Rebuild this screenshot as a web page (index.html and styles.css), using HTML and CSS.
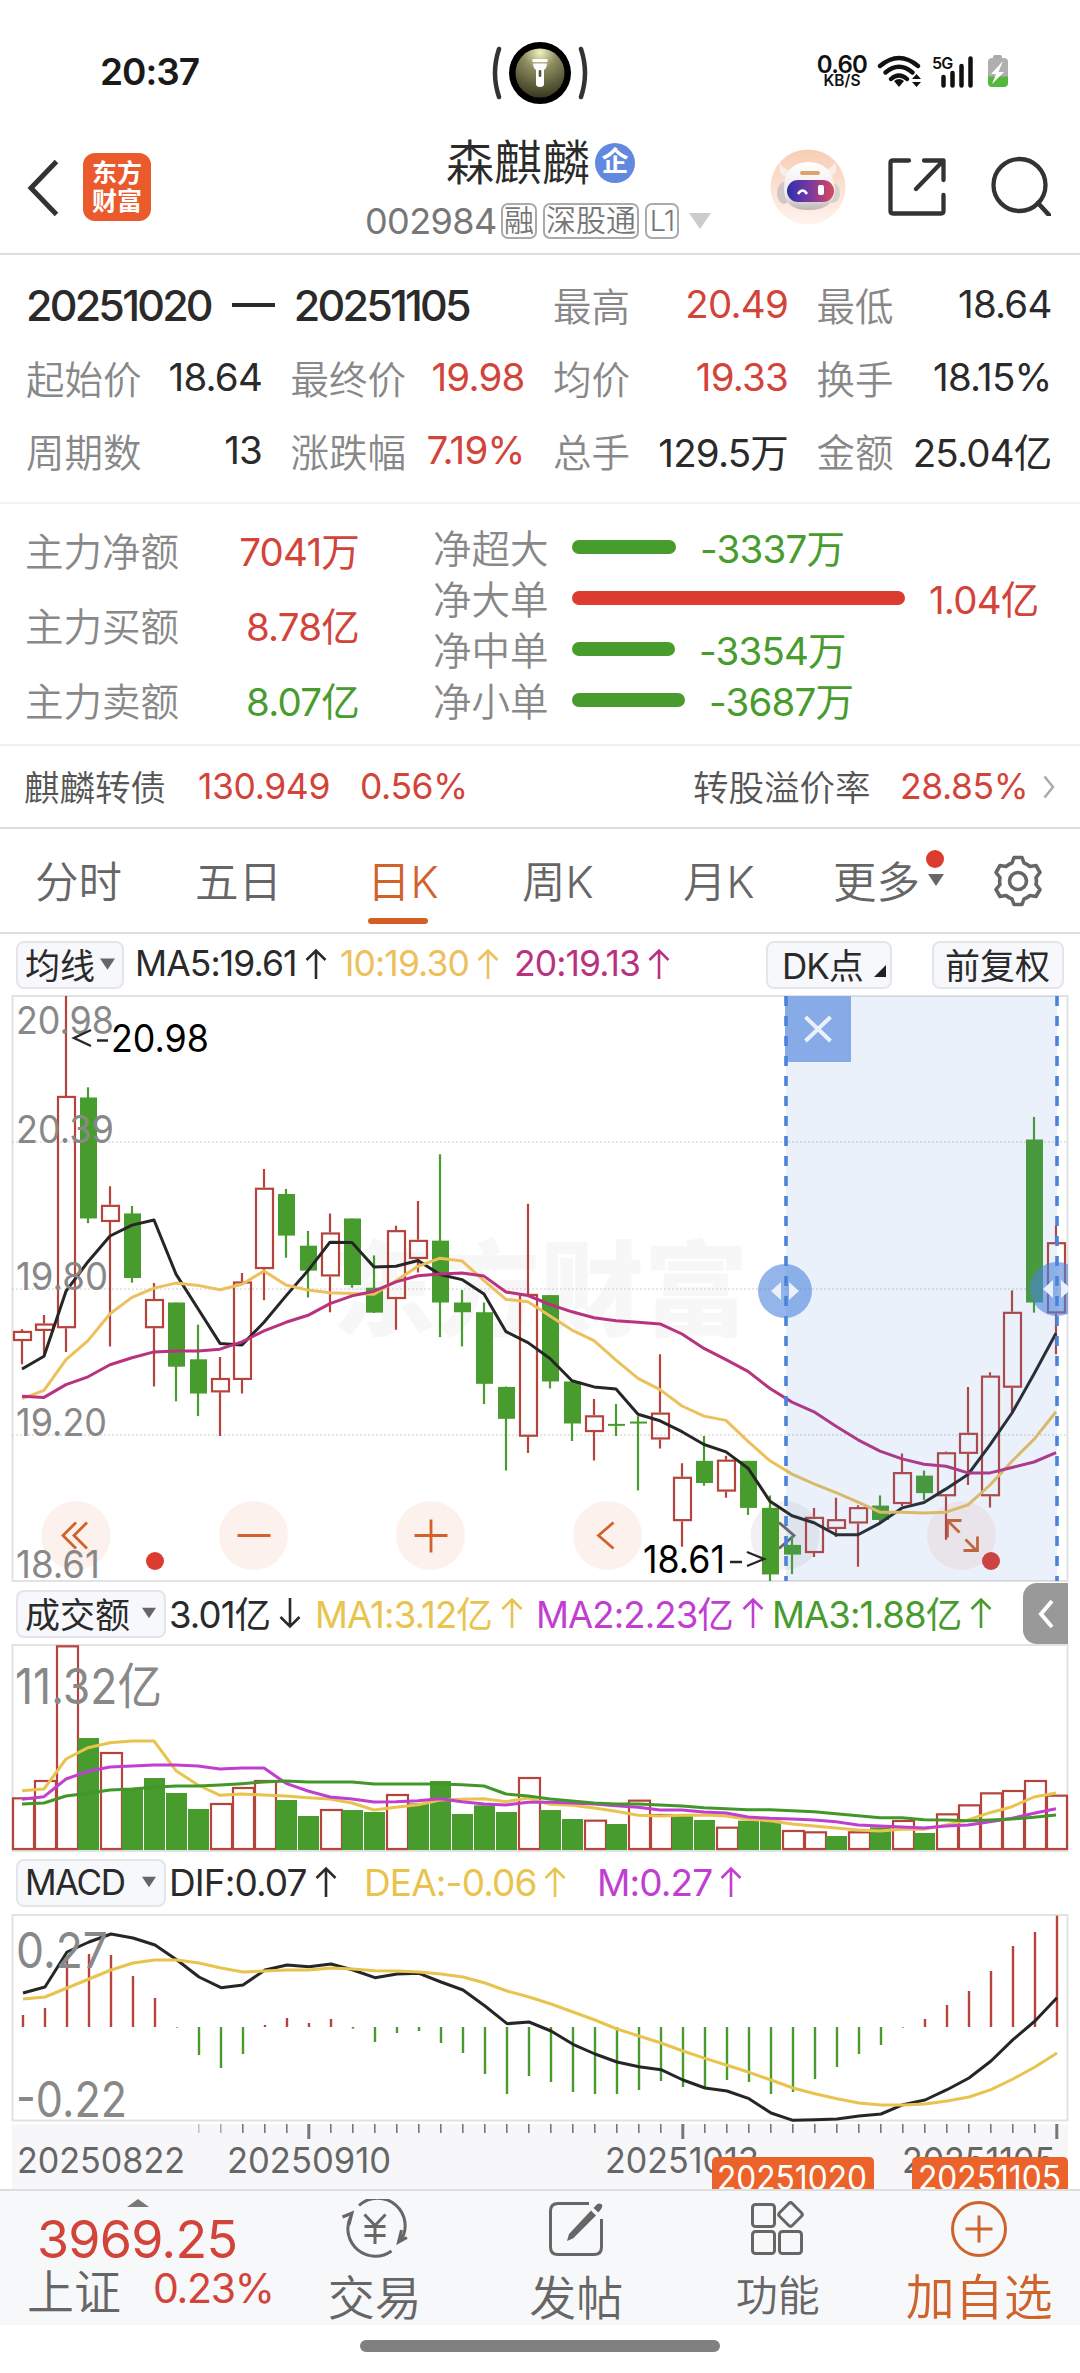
FILE: index.html
```html
<!DOCTYPE html>
<html lang="zh-CN">
<head>
<meta charset="utf-8">
<title>森麒麟 002984</title>
<link rel="stylesheet" href="styles.css">
</head>
<body>
<svg class="defs" aria-hidden="true">
  <symbol id="up" viewBox="0 0 22 32"><path d="M11 31V3M1.5 12 11 2.500l9.500 9.500" fill="none" stroke="currentColor" stroke-width="2.600"/></symbol>
  <symbol id="down" viewBox="0 0 22 32"><path d="M11 1v28M1.500 20 11 29.500 20.500 20" fill="none" stroke="currentColor" stroke-width="2.600"/></symbol>
</svg>

<div class="status">
  <span class="clock">20:37</span>
  <svg class="island" width="96" height="64" viewBox="0 0 96 64">
    <defs>
      <radialGradient id="lamp" cx=".5" cy=".08" r=".95"><stop offset="0" stop-color="#f0f2c4"/><stop offset=".35" stop-color="#8f8f62"/><stop offset="1" stop-color="#35351e"/></radialGradient>
    </defs>
    <path d="M7 8Q-1 32 7 56M89 8q8 24 0 48" fill="none" stroke="#333" stroke-width="4.500" stroke-linecap="round"/>
    <circle cx="48" cy="32" r="31"/>
    <circle cx="48" cy="32" r="24.500" fill="url(#lamp)"/>
    <path d="M40.500 18h15v3h-15zM41 22.500h14q0 4-3 6.500v14q0 3-4 3t-4-3V29q-3-2.500-3-6.500z" fill="#fff"/>
    <rect x="46.700" y="29" width="2.600" height="7" rx="1.300" fill="#55553a"/>
  </svg>
  <div class="signals">
    <div class="speed"><b>0.60</b><i>KB/S</i></div>
    <svg width="132" height="36" viewBox="876 53 132 36">
      <path d="M880 66Q899 50 918 66M885.500 72.500q13.500-11.500 27 0M891 79q8-7 16 0" fill="none" stroke="#111" stroke-width="4.300" stroke-linecap="round"/>
      <path d="M894 81q5-4 10 0l-5 6zM912 79h9l-4.500-5zM912 82h9l-4.500 5z" fill="#111"/>
      <path d="M943.500 77v8.500M952.500 73v12.500M961.500 66v19.500M970.500 58.500v27" stroke="#111" stroke-width="4.500" stroke-linecap="round"/>
      <rect x="993" y="55" width="9" height="5" rx="2" fill="#aaa"/>
      <path d="M988 62q0-4 4-4h12q4 0 4 4v15h-20z" fill="#afafaf"/>
      <path d="M988 76.500h20V83q0 4-4 4h-12q-4 0-4-4z" fill="#55b83a"/>
      <path d="M1003 61 991 74h5l-4 10 12-12h-5.500z" fill="#fff"/>
      <text x="932" y="69" class="net">5G</text>
    </svg>
  </div>
</div>

<header class="head">
  <div class="head-left">
    <svg width="34" height="60" viewBox="0 0 34 60"><path d="M30.500 3.500 5 30l25.500 26.500" fill="none" stroke="#333" stroke-width="5"/></svg>
    <div class="logo"><span>东方</span><span>财富</span></div>
  </div>
  <div class="head-mid">
    <div class="name">森麒麟<span class="badge">企</span></div>
    <div class="code"><span class="num">002984</span><em>融</em><em>深股通</em><em>L1</em>
      <svg width="22" height="16" viewBox="0 0 22 16"><path d="M0 0h22L11 16z" fill="#ccc"/></svg>
    </div>
  </div>
  <div class="head-right">
    <svg width="76" height="76" viewBox="0 0 76 76">
      <defs>
        <linearGradient id="halo" x2="0" y2="1"><stop offset="0" stop-color="#f8cdb4"/><stop offset="1" stop-color="#fff4ee"/></linearGradient>
        <linearGradient id="visor"><stop offset="0" stop-color="#2f2fae"/><stop offset=".5" stop-color="#7a3a9e"/><stop offset="1" stop-color="#d84a5c"/></linearGradient>
        <linearGradient id="shell" x2="0" y2="1"><stop offset="0" stop-color="#fff"/><stop offset=".7" stop-color="#eee9e8"/><stop offset="1" stop-color="#bdb3b2"/></linearGradient>
      </defs>
      <circle cx="38" cy="38" r="37.500" fill="url(#halo)"/>
      <path d="M17 28Q7 26 10 14q3 6 11 8zM59 28q10-3 6-15-3 6-10 9z" fill="#f6eeeb"/>
      <ellipse cx="14" cy="44" rx="7" ry="11" fill="#cfc7c8"/><ellipse cx="63" cy="44" rx="7" ry="10" fill="#d8d0d0"/>
      <path d="M14 40Q14 14 38 13q24 0 27 27 0 21-27 21-24 0-24-21z" fill="url(#shell)"/>
      <rect x="30" y="22" width="20" height="4" rx="2" fill="#dda36b"/>
      <rect x="17" y="31" width="47" height="22" rx="11" fill="url(#visor)"/>
      <path d="M28 45q4.500-7 9 0" fill="none" stroke="#fff" stroke-width="2.600"/>
      <rect x="48" y="36" width="6" height="10" rx="2" fill="#fff"/>
    </svg>
    <svg width="58" height="58" viewBox="0 0 58 58"><path d="M21 2.500H5Q2.500 2.500 2.500 5v48q0 2.500 2.500 2.500h48q2.500 0 2.500-2.500V37M36 2.500h19.500V22M55 3 28 31" fill="none" stroke="#333" stroke-width="4.300" stroke-linecap="round" stroke-linejoin="round"/></svg>
    <svg width="60" height="60" viewBox="0 0 60 60"><circle cx="28.500" cy="29" r="26" fill="none" stroke="#333" stroke-width="4.300"/><path d="M47 47l11 12" stroke="#333" stroke-width="4.600" stroke-linecap="round"/></svg>
  </div>
</header>

<section class="stats">
  <div class="range"><b>20251020</b><b class="dash"></b><b>20251105</b></div>
  <div class="cell c3"><label>最高</label><span class="red">20.49</span></div>
  <div class="cell c4"><label>最低</label><span>18.64</span></div>
  <div class="cell"><label>起始价</label><span>18.64</span></div>
  <div class="cell"><label>最终价</label><span class="red">19.98</span></div>
  <div class="cell"><label>均价</label><span class="red">19.33</span></div>
  <div class="cell"><label>换手</label><span>18.15%</span></div>
  <div class="cell"><label>周期数</label><span>13</span></div>
  <div class="cell"><label>涨跌幅</label><span class="red">7.19%</span></div>
  <div class="cell"><label>总手</label><span>129.5万</span></div>
  <div class="cell"><label>金额</label><span>25.04亿</span></div>
</section>

<section class="flow">
  <div class="main-flow">
    <div class="cell"><label>主力净额</label><span class="red">7041万</span></div>
    <div class="cell"><label>主力买额</label><span class="red">8.78亿</span></div>
    <div class="cell"><label>主力卖额</label><span class="green">8.07亿</span></div>
  </div>
  <div class="net-flow">
    <div class="bar-row green"><label>净超大</label><i class="bar" style="width:104px"></i><span>-3337万</span></div>
    <div class="bar-row red"><label>净大单</label><i class="bar" style="width:333px"></i><span>1.04亿</span></div>
    <div class="bar-row green"><label>净中单</label><i class="bar" style="width:103px"></i><span>-3354万</span></div>
    <div class="bar-row green"><label>净小单</label><i class="bar" style="width:113px"></i><span>-3687万</span></div>
  </div>
</section>

<section class="bond">
  <label>麒麟转债</label><span>130.949</span><span>0.56%</span>
  <label class="premium">转股溢价率</label><span class="ratio">28.85%</span>
  <svg width="12" height="24" viewBox="0 0 12 24"><path d="M1.500 1.500 10 12 1.500 22.500" fill="none" stroke="#aaa" stroke-width="2.500"/></svg>
</section>

<nav class="tabs">
  <span>分时</span><span>五日</span><span class="on">日K</span><span>周K</span><span>月K</span>
  <span class="more">更多<i class="dot"></i><svg width="16" height="12" viewBox="0 0 16 12"><path d="M0 0h16L8 12z" fill="#666"/></svg></span>
  <svg class="gear" width="54" height="54" viewBox="0 0 54 54"><g fill="none" stroke="#666" stroke-width="3.600" stroke-linejoin="round"><path d="M23 3.500h8l2 5.500q3 1 6 3.500l6-1 4 7-4 5q.8 3.500 0 7l4 5-4 7-6-1q-3 2.500-6 3.500l-2 5.500h-8l-2-5.500q-3-1-6-3.500l-6 1-4-7 4-5q-.8-3.500 0-7l-4-5 4-7 6 1q3-2.500 6-3.500z"/><circle cx="27" cy="27" r="8.500"/></g></svg>
</nav>

<div class="bar-head ma">
  <div class="pick">均线<svg width="15" height="12" viewBox="0 0 16 12"><path d="M0 0h16L8 12z" fill="#666"/></svg></div>
  <span>MA5:19.61<svg><use href="#up"/></svg></span>
  <span class="amber">10:19.30<svg><use href="#up"/></svg></span>
  <span class="rose">20:19.13<svg><use href="#up"/></svg></span>
  <div class="pick dk">DK点<svg width="12" height="12" viewBox="0 0 12 12"><path d="M12 0v12H0z" fill="#222"/></svg></div>
  <div class="pick adjust">前复权</div>
</div>
<svg id="kline" class="plot" width="1080" height="588" viewBox="0 995 1080 588"></svg>

<div class="bar-head vol">
  <div class="pick">成交额<svg width="14" height="12" viewBox="0 0 16 12"><path d="M0 0h16L8 12z" fill="#666"/></svg></div>
  <span>3.01亿<svg><use href="#down"/></svg></span>
  <span class="gold">MA1:3.12亿<svg><use href="#up"/></svg></span>
  <span class="violet">MA2:2.23亿<svg><use href="#up"/></svg></span>
  <span class="green">MA3:1.88亿<svg><use href="#up"/></svg></span>
  <div class="drawer"><svg width="18" height="30" viewBox="0 0 18 30"><path d="M15 2 4 15l11 13" fill="none" stroke="#fff" stroke-width="4"/></svg></div>
</div>
<svg id="volume" class="plot" width="1080" height="209" viewBox="0 1644 1080 209"></svg>

<div class="bar-head macd">
  <div class="pick">MACD<svg width="14" height="12" viewBox="0 0 16 12"><path d="M0 0h16L8 12z" fill="#666"/></svg></div>
  <span>DIF:0.07<svg><use href="#up"/></svg></span>
  <span class="gold">DEA:-0.06<svg><use href="#up"/></svg></span>
  <span class="violet">M:0.27<svg><use href="#up"/></svg></span>
</div>
<svg id="macd" class="plot" width="1080" height="276" viewBox="0 1913 1080 276"></svg>

<footer class="dock">
  <div class="index">
    <svg width="22" height="8" viewBox="0 0 22 8"><path d="M0 8h22L11 0z" fill="#777"/></svg>
    <b>3969.25</b>
    <div class="idx-row"><label>上证</label><span>0.23%</span></div>
  </div>
  <div class="item">
    <svg width="68" height="60" viewBox="0 0 68 60"><g fill="none" stroke="#666" stroke-width="3"><path d="M18 6.500A27.500 27.500 0 0 1 59.500 42M50.500 52A27.500 27.500 0 0 1 9.500 18M1.500 18l9.500-4-3 12M66 38.500l-8.500 4.500 3-12M23.500 15.500 34 26.500l10.500-11M34 26v19M23.500 27.500h21M23.500 36.500h21"/></g></svg>
    <span class="t-47">交易</span>
  </div>
  <div class="item">
    <svg width="60" height="60" viewBox="0 0 60 60"><path d="M43 4.500H12q-7.500 0-7.500 7.500v36q0 7.500 7.500 7.500h36q7.500 0 7.500-7.500V20" fill="none" stroke="#666" stroke-width="3"/><path d="M45 11.500l5 5-23 23-6 2.500 2-7zM47.500 9l3.800-4q4-1.500 5 1.500.5 2-4 7z" fill="#666"/></svg>
    <span class="t-47">发帖</span>
  </div>
  <div class="item">
    <svg width="60" height="60" viewBox="0 0 60 60"><g fill="none" stroke="#666" stroke-width="3"><rect x="4.500" y="5.500" width="22" height="22" rx="3"/><rect x="4.500" y="32.500" width="22" height="22" rx="3"/><rect x="31.500" y="32.500" width="22" height="22" rx="3"/><rect x="33.500" y="6.500" width="18" height="18" rx="2.500" transform="rotate(45 42.500 15.500)"/></g></svg>
    <span class="t-42">功能</span>
  </div>
  <div class="item orange">
    <svg width="60" height="60" viewBox="0 0 60 60"><g fill="none" stroke="currentColor" stroke-width="3"><circle cx="30" cy="30" r="26.500"/><path d="M30 16.500v27M16.500 30h27"/></g></svg>
    <span class="t-48">加自选</span>
  </div>
</footer>
<div class="home"><i></i></div>
<script src="script.js"></script>
</body>
</html>
```
FILE: styles.css
```css
* { box-sizing: border-box; }
body {
  margin: 0;
  width: 1080px;
  background: #fff;
  color: #2a2a2a;
  font-family: Inter, "Noto Sans CJK SC", sans-serif;
  font-weight: 400;
  white-space: nowrap;
}
svg { display: block; flex: none; }
i, em { font-style: normal; }
label, .name, .code, .tabs, .item { font-weight: 350; }
.defs { width: 0; height: 0; position: absolute; }
.red { color: #d2443a; }
.green { color: #489c2d; }
.amber { color: #ecc05c; }
.gold { color: #e8c44e; }
.rose { color: #b83280; }
.violet { color: #c03fd0; }
.orange { color: #d0622c; }

.status { height: 142px; display: grid; grid-template-columns: 392px 96px 420px; align-items: center; padding: 0 0 0 100px; }
.clock { font-size: 37px; font-weight: 600; letter-spacing: -1px; color: #1a1a1a; }
.island { margin-top: 3px; }
.signals { display: flex; gap: 9px; align-items: center; justify-content: flex-end; }
.speed { display: flex; flex-direction: column; align-items: center; color: #111; font-weight: 600; }
.speed b { font-size: 24px; line-height: 19px; font-weight: 600; letter-spacing: -.8px; }
.speed i { font-size: 15.500px; line-height: 14px; }
.net { font-size: 16px; font-weight: 600; letter-spacing: -.8px; fill: #111; }

.head { height: 113px; border-bottom: 2px solid #ddd; display: grid; grid-template-columns: 300px 470px 310px; }
.head-left { display: flex; align-items: flex-start; padding: 11px 0 0 26px; gap: 23px; }
.head-left > svg { margin-top: 5px; }
.logo { width: 68px; height: 68px; border-radius: 12px; background: #ea5a2c; color: #fff; font-weight: 700; font-size: 25px; line-height: 28px; display: flex; flex-direction: column; align-items: center; justify-content: center; }
.head-mid { display: flex; flex-direction: column; padding-left: 65px; }
.name { font-size: 48px; line-height: 48px; height: 58px; display: flex; align-items: center; padding-left: 81px; gap: 5px; margin-top: -8px; }
.badge { width: 40px; height: 40px; border-radius: 50%; background: #6289e0; color: #fff; font-size: 27px; font-weight: 700; line-height: 38px; text-align: center; }
.code { display: flex; align-items: center; height: 40px; margin-top: 9px; color: #777; font-size: 36px; }
.code .num { width: 136px; letter-spacing: -.6px; font-weight: 400; }
.code em { border: 2px solid #aaa; border-radius: 7px; height: 36px; line-height: 31px; font-size: 30px; padding: 0 1px; width: 36px; text-align: center; margin-right: 6px; }
.code em:nth-of-type(2) { width: 96px; }
.code em:nth-of-type(3) { width: 34px; font-size: 29px; letter-spacing: -1px; }
.code svg { margin-left: 4px; }
.head-right { display: flex; align-items: flex-start; padding: 7px 0 0 0; }
.head-right svg:nth-child(2) { margin: 9px 0 0 42px; }
.head-right svg:nth-child(3) { margin: 7px 0 0 45px; }

.stats { height: 249px; border-bottom: 2px solid #f2f2f2; padding: 13px 28px 0 26px; display: grid; grid-template-columns: 236px 234px 235px 235px; grid-auto-rows: 73px; column-gap: 28.500px; }
.range { grid-column: span 2; display: flex; align-items: center; font-size: 43px; }
.range b { font-weight: 500; letter-spacing: -2.800px; }
.range .dash { width: 43px; height: 4px; background: #2a2a2a; margin: 0 19px 0 21px; }
.cell { display: flex; align-items: center; justify-content: space-between; font-size: 38.500px; padding-bottom: 2px; }
.cell label, .bar-row label { color: #888; }
.cell span, .bar-row span, .bond span { letter-spacing: -.8px; }

.flow { height: 242px; border-bottom: 2px solid #f0f0f0; display: flex; padding-left: 25px; }
.main-flow { width: 334px; margin-right: 74px; padding-top: 8px; display: grid; grid-auto-rows: 75px; height: 233px; }
.net-flow { padding-top: 16.500px; display: grid; grid-auto-rows: 51px; }
.bar-row { display: flex; align-items: center; font-size: 38.500px; }
.bar-row label { width: 139px; }
.bar { height: 14px; border-radius: 7px; background: currentColor; margin-top: 2px; }
.bar-row span { margin-left: 24px; }
.bar-row.red .bar { background: #dc3b30; }

.bond { height: 83px; border-bottom: 2px solid #ddd; display: flex; align-items: center; padding: 0 24px; font-size: 35.500px; }
.bond label { color: #555; width: 174px; margin-top: -3px; }
.bond span { color: #d2443a; width: 162px; letter-spacing: -.4px; }
.bond label.premium { width: 207px; margin-left: 171px; }
.bond span.ratio { width: 143px; }

.tabs { height: 105px; border-bottom: 2px solid #ddd; display: grid; grid-template-columns: 160px 172px 155px 161px 150px 194px 1fr; padding-left: 35px; align-items: center; font-size: 43.500px; color: #666; }
.tabs span { display: flex; align-items: center; height: 103px; position: relative; padding-bottom: 2px; }
.tabs .on { color: #d0622c; }
.tabs .on::after { content: ""; position: absolute; left: 1px; bottom: 8px; width: 60px; height: 6px; border-radius: 3px; background: #d35f27; }
.more .dot { position: absolute; left: 93px; top: 21px; width: 18px; height: 18px; border-radius: 50%; background: #dc3b30; }
.more svg { margin-left: 8px; }
.gear { margin-left: -36px; }

.bar-head { display: grid; align-items: center; font-size: 36px; padding-left: 16px; position: relative; }
.bar-head span { display: flex; align-items: center; letter-spacing: -.9px; padding-bottom: 2px; }
.bar-head span svg { width: 22px; height: 32px; margin-left: 8px; }
.pick { height: 48px; border: 2px solid #e3e5ea; border-radius: 8px; background: #f7f8fb; display: flex; align-items: center; padding: 0 7px 2px; font-size: 35px; gap: 5px; }
.ma { height: 61px; grid-template-columns: 119px 205px 174px 252px 126px 40px 132px; font-size: 35.500px; }
.ma .pick:first-child { width: 108px; }
.adjust { grid-column: 7; padding-left: 11px; }
.dk { padding-left: 14px; letter-spacing: -1px; }
.dk svg { align-self: flex-end; margin: 0 0 8px 6px; }
.vol { height: 61px; grid-template-columns: 153px 146px 221px 236px 251px 45px; font-size: 36.500px; }
.vol .pick, .macd .pick { width: 150px; justify-content: space-between; padding-right: 8px; }
.macd .pick { letter-spacing: -1.500px; }
.vol span svg { margin-left: 9px; }
.macd { height: 60px; grid-template-columns: 153px 195px 233px 200px; font-size: 37px; }
.drawer { height: 61px; background: #999; border-radius: 14px 0 0 14px; display: flex; align-items: center; justify-content: center; }
.plot text { font-size: 38.500px; }
.plot .scale { fill: #888; }
.plot .date { fill: #666; font-size: 36px; }
.plot .big { font-size: 49px; }
.plot .tag { fill: #fff; font-size: 34px; }
.plot .mark { fill: #f7f7f7; font-size: 103px; font-weight: 800; }

.dock { height: 136px; background: #f7f8fa; border-top: 2px solid #ddd; display: grid; grid-template-columns: 274px repeat(4, 201.500px); color: #666; }
.index { padding: 8px 0 0 27px; }
.index svg { margin-left: 100px; }
.index b { display: block; font-size: 52px; font-weight: 400; letter-spacing: -.8px; line-height: 50px; padding: 8px 0 0 10px; color: #d2443a; height: 58px; }
.idx-row { display: flex; align-items: center; font-size: 47px; height: 46px; }
.idx-row label { width: 126px; }
.idx-row span { color: #d2443a; font-size: 41px; letter-spacing: -1.300px; }
.item { display: flex; flex-direction: column; align-items: center; padding-top: 8px; }
.item span { height: 60px; line-height: 60px; margin-top: 9px; }
.item svg { height: 60px; }
.t-47 { font-size: 47px; }
.t-42 { font-size: 42px; }
.t-48 { font-size: 49px; }
.item .t-42 { margin-top: 7px; }
.home { height: 48px; display: flex; justify-content: center; padding-top: 15px; }
.home i { width: 360px; height: 12px; border-radius: 6px; background: #808080; }
```
FILE: script.js
```js
// Shared helpers. Every series has one point per trading day, 22px apart.
const STEP = 22, X0 = 22, LEFT = 12, RIGHT = 1068;
const RED = '#b5443c', GREEN = '#489c2d', GOLD = '#e8c44e', VIOLET = '#c03fd0', INK = '#262626';
const cx = i => X0 + i * STEP;
const line = (data, y, color, w) =>
  `<polyline fill="none" stroke="${color}" stroke-width="${w}" stroke-linejoin="round" points="${data.map((v, i) => cx(i) + ',' + y(v).toFixed(1)).join(' ')}"/>`;
const rect = (x, y, w, h, extra) => `<rect x="${x}" y="${y}" width="${w}" height="${h}" ${extra}/>`;
const text = (x, y, len, cls, s, extra = '') => `<text x="${x}" y="${y}" textLength="${len}" lengthAdjust="spacingAndGlyphs" class="${cls}" ${extra}>${s}</text>`;
const frame = (y, h) => rect(LEFT + .5, y, RIGHT - LEFT - 1, h, 'fill="none" stroke="#e2e2e2" stroke-width="2"');

// ---- Daily candles: [up/down, high, body top, body bottom, low]
const candles = [
  'r 898 902 928 988','r 861 883 902 962','r 41 298 895 956','g 276 302 613 625','r 530 578 622 942','g 581 600 766 778',
  'r 779 820 895 1045','g 829 829 994 1083','g 886 975 1063 1121','r 969 1023 1060 1172','r 753 775 1028 1063','r 486 534 743 823',
  'g 537 550 657 714','g 645 683 747 816','r 600 649 762 854','g 613 613 784 791','g 708 791 855 856','r 632 643 820 899',
  'r 568 668 717 752','g 448 670 829 918','g 797 829 854 942','g 829 854 1038 1090','g 1045 1046 1128 1261','r 575 807 1174 1216',
  'g 810 810 1032 1050','g 1032 1032 1140 1185','r 1077 1119 1162 1235','g 1090 1141 1145 1172','g 1121 1135 1139 1312','r 962 1112 1181 1204',
  'r 1242 1277 1391 1457','g 1172 1236 1293 1300','r 1223 1233 1315 1331','g 1236 1236 1357 1375','g 1325 1357 1528 1545','g 1429 1452 1477 1527',
  'r 1357 1380 1473 1483','r 1331 1386 1411 1432','r 1350 1355 1397 1508','g 1325 1351 1388 1395','r 1217 1265 1347 1352','g 1261 1274 1319 1337',
  'r 1212 1214 1327 1439','r 1046 1164 1218 1298','r 1008 1017 1327 1356','r 798 853 1048 1115','g 352 410 829 855','r 632 674 857 962'
].map(s => s.split(' ').map((v, i) => i ? +v : v));
const ma5 = [1000,967,800,724,658,630,617,756,845,934,938,880,812,747,674,675,738,736,721,757,770,807,904,932,973,1030,1046,1051,1116,1133,1161,1194,1213,1255,1340,1377,1395,1426,1426,1396,1357,1343,1308,1271,1195,1113,1013,908];
const ma10 = [1076,1055,976,927,858,816,792,779,785,796,782,748,784,797,804,806,808,773,736,715,722,773,821,827,864,900,927,977,1024,1053,1095,1121,1132,1186,1236,1270,1295,1318,1342,1368,1368,1370,1368,1349,1298,1237,1181,1110];
const ma20 = [1070,1073,1040,1020,989,971,956,954,954,949,930,902,880,862,832,812,800,776,760,756,753,761,802,811,834,853,868,876,880,884,910,947,976,1006,1050,1085,1110,1147,1182,1211,1231,1245,1250,1267,1267,1253,1239,1215];
const ky = v => 980 + v * .38903;

const candle = ([t, hi, a, b, lo], i) => {
  const x = cx(i), [H, A, B, L] = [hi, a, b, lo].map(ky);
  if (t === 'g') return `<path d="M${x} ${H}V${L}" stroke="${GREEN}" stroke-width="2.200"/>` + rect(x - 8, A, 17, Math.max(B - A, 2), `fill="${GREEN}"`);
  return `<path d="M${x} ${H}V${A}M${x} ${B}V${L}" stroke="${RED}" stroke-width="2.200"/>` + rect(x - 8, A + 1, 17, B - A - 2, `fill="none" stroke="${RED}" stroke-width="2.200"`);
};
const btn = (x, icon, bg = '#f9e6dc', fg = '#d0622c') =>
  `<circle cx="${x}" cy="1535.500" r="34.500" fill="${bg}" fill-opacity=".55"/><path transform="translate(${x} 1535.500)" d="${icon}" fill="none" stroke="${fg}" stroke-width="2.800"/>`;
const handle = (x, y) => `<circle cx="${x}" cy="${y}" r="27" fill="#4b83dc" fill-opacity=".6"/><path d="M${x - 4} ${y - 9}v18l-10-9zM${x + 4} ${y - 9}v18l10-9z" fill="#eaf1fc"/>`;
const dashes = x => `<path d="M${x} 996V1581" stroke="#4b83d8" stroke-width="3.600" stroke-dasharray="10 10"/>`;

document.getElementById('kline').innerHTML =
  frame(996, 585)
  + text(332, 1328, 416, 'mark', '东方财富')
  + [1142, 1289, 1435].map(y => `<path d="M12 ${y}H1068" stroke="#ccc" stroke-dasharray="2 2"/>`).join('')
  + btn(76, 'M0-13-13 0 0 13M11-13-2 0 11 13') + btn(253.500, 'M-16 0h33') + btn(430.500, 'M-16 0h33M.500-16v33') + btn(607.500, 'M6-13-9 0 6 13')
  + btn(785, 'M-6-13 9 0-6 13', '#e6e6e6', '#666') + btn(961.500, 'M-14 2v-17h14M-13-14 -2-3M4 4 15 15M2 15h14V1')
  + candles.map(candle).join('')
  + line(ma5, ky, INK, 3) + line(ma10, ky, '#ecc05c', 3) + line(ma20, ky, '#b83280', 3)
  + text(16, 1034, 98, 'scale', '20.98') + text(16, 1143, 98, 'scale', '20.39') + text(16, 1290, 92, 'scale', '19.80')
  + text(16, 1436, 91, 'scale', '19.20') + text(16, 1578, 84, 'scale', '18.61')
  + `<path d="M91 1030 74 1038l17 8M97 1040.500h11" fill="none" stroke="${INK}" stroke-width="2.400"/>`
  + text(111, 1052, 98, '', '20.98')
  + text(643, 1573, 82, '', '18.61') + `<path d="M730 1562h12M747 1552l17 7-17 7" fill="none" stroke="${INK}" stroke-width="2.400"/>`
  + '<circle cx="155" cy="1561" r="9" fill="#dc3b30"/><circle cx="991" cy="1561" r="9" fill="#dc3b30"/>'
  + rect(786, 996, 271, 585, 'fill="#4b83dc" fill-opacity=".115"')
  + rect(785, 996, 66, 66, 'fill="#86abe7"') + '<path d="M805.500 1017l25 24M830.500 1017l-25 24" stroke="#eaf1fc" stroke-width="4"/>'
  + dashes(786) + dashes(1057)
  + handle(785, 1291)
  + '<clipPath id="edge"><rect x="1000" y="1200" width="68" height="200"/></clipPath><g clip-path="url(#edge)">' + handle(1057, 1289) + '</g>';

// ---- Turnover
const bars = 'r682 r630 r226 g504 r546 g655 g624 g669 g717 r699 r651 r630 g690 g738 r717 g720 g726 r672 g700 g633 g732 g706 g726 r621 g720 g747 r749 g762 r689 r732 g738 g750 r770 g752 g752 r780 r784 g798 r784 g772 r750 g789 r730 r703 r667 r660 r630 r674'.split(' ');
const v1 = [662,657,567,533,518,513,513,602,645,676,672,675,678,683,687,699,720,712,704,690,688,686,695,684,703,706,714,724,736,738,736,735,738,748,752,762,768,774,780,783,778,778,765,750,728,710,681,669];
const v2 = [688,680,627,604,591,588,585,585,588,597,594,594,640,663,681,687,696,695,692,686,695,702,705,697,697,699,702,707,712,720,720,726,729,741,745,747,750,755,765,768,771,774,768,765,755,745,730,716];
const v3 = [702,699,678,670,660,657,652,648,648,645,641,636,633,636,636,636,642,642,642,642,644,648,672,678,687,693,699,702,702,705,708,713,716,719,719,722,725,731,737,743,743,749,750,752,750,747,742,735];
const vy = v => 1570 + v / 3;
document.getElementById('volume').innerHTML =
  frame(1645, 206)
  + bars.map((s, i) => {
    const y = vy(+s.slice(1)), x = LEFT + i * STEP;
    return s[0] === 'g' ? rect(x, y, 21, 1850 - y, `fill="${GREEN}"`) : rect(x + 1, y + 1, i === 47 ? 20 : 21, 1849 - y - 1, `fill="#fff" stroke="${RED}" stroke-width="2.200"`);
  }).join('')
  + line(v1, vy, GOLD, 3) + line(v2, vy, VIOLET, 3) + line(v3, vy, '#43972a', 3)
  + text(15, 1704, 147, 'scale big', '11.32亿');

// ---- MACD
const hist = [495,474,318,312,315,378,444,533,615,654,612,525,504,519,507,536,576,549,543,579,609,672,732,678,696,726,732,732,720,693,711,714,690,696,732,726,687,651,612,585,533,507,465,423,363,288,246,197];
const dif = [429,411,306,276,252,264,285,330,381,413,405,360,345,350,342,360,383,372,370,396,420,468,521,516,543,583,612,636,650,659,690,714,723,746,789,811,809,807,798,792,764,750,719,684,633,569,513,443];
const dea = [447,441,414,387,360,339,330,330,339,354,366,363,360,360,354,357,362,363,366,372,381,399,423,441,462,486,510,537,558,579,603,625,646,667,690,714,731,746,759,765,765,762,753,741,719,687,651,609];
const my = v => 1850 + v / 3;
const ticks = Array.from({ length: 40 }, (_, k) => k + 8).map(i => {
  const long = [13, 30, 47].includes(i);
  return `<path d="M${cx(i) + .8} 2124V${long ? 2139 : 2133}" stroke="#777" stroke-width="${long ? 3 : 1.600}" opacity="${i < 10 ? (i - 6) / 5 : 1}"/>`;
}).join('');
document.getElementById('macd').innerHTML =
  frame(1915, 205.500)
  + rect(12, 2124, 1056, 65, 'fill="#f7f7f9"') + ticks
  + hist.map((v, i) => `<path d="M${cx(i) + 1} 2027V${my(v)}" stroke="${v < 531 ? RED : GREEN}" stroke-width="2.400"/>`).join('')
  + `<g transform="translate(1 0)">${line(dif, my, INK, 3)}${line(dea, my, GOLD, 3)}</g>`
  + text(16, 1968, 92, 'scale big', '0.27') + text(16, 2117, 111, 'scale big', '-0.22')
  + text(17, 2172.500, 168, 'date', '20250822') + text(227, 2172.500, 164, 'date', '20250910')
  + text(605, 2172.500, 154, 'date', '20251013') + text(902, 2172.500, 153, 'date', '20251105')
  + '<path d="M712 2189v-27q0-5 5-5h152q5 0 5 5v27zM912 2189v-27q0-5 5-5h146q5 0 5 5v27z" fill="#eb632a"/>'
  + text(717, 2190, 150, 'tag', '20251020') + text(918, 2190, 143, 'tag', '20251105');
```
